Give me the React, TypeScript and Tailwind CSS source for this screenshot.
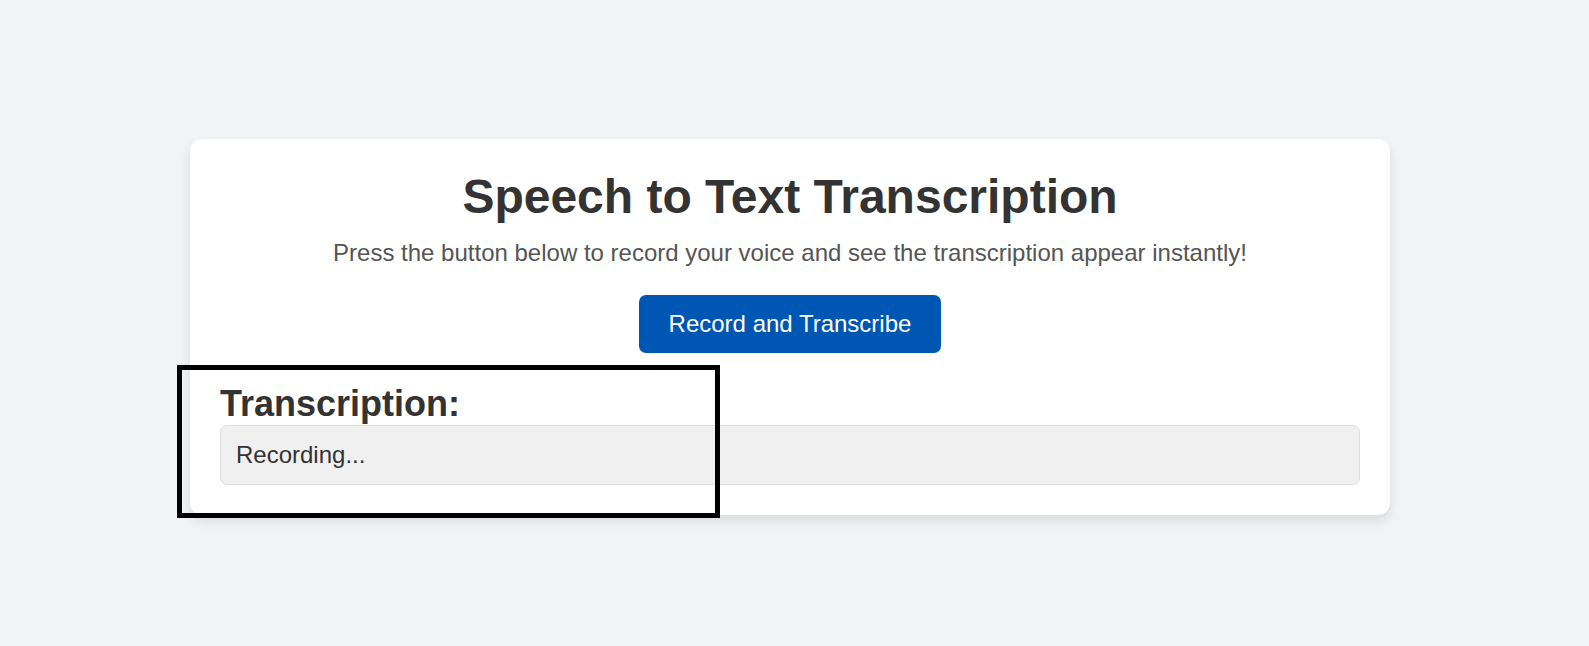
import { FC } from "react";

const font = { fontFamily: '"Liberation Sans", Arial, sans-serif' };

const Transcription: FC<{ text: string }> = ({ text }) => {
  return (
    <div className="text-left">
      <h2 className="mt-[30px] mb-[1px] text-[36px] leading-[41px] font-bold text-[#333]">
        Transcription:
      </h2>
      <div className="border border-[#ddd] rounded-[7px] bg-[#f0f0f0] p-[15px] text-[24px] leading-[28px] text-[#333]">
        {text}
      </div>
    </div>
  );
};

export default function App() {
  return (
    <div
      className="min-h-screen bg-[#f2f3f5] flex justify-center items-start pt-[139px] pr-[9px]"
      style={font}
    >
      <div className="relative w-[1200px] bg-white rounded-[12px] p-[30px] text-center shadow-[0_6px_12px_rgba(0,0,0,0.1)]">
        <h1 className="text-[48px] leading-[55px] font-bold text-[#333] mb-[15px]">
          Speech to Text Transcription
        </h1>
        <p className="text-[24px] leading-[28px] text-[#555]">
          Press the button below to record your voice and see the transcription
          appear instantly!
        </p>
        <button className="mt-[28px] bg-[#0056b3] text-white text-[24px] leading-[28px] px-[30px] py-[15px] rounded-[7px]">
          Record and Transcribe
        </button>
        <Transcription text="Recording..." />

        {/* highlight frame drawn over the result area */}
        <div className="absolute left-[-13px] top-[226px] w-[543px] h-[153px] border-[5px] border-black pointer-events-none" />
      </div>
    </div>
  );
}
